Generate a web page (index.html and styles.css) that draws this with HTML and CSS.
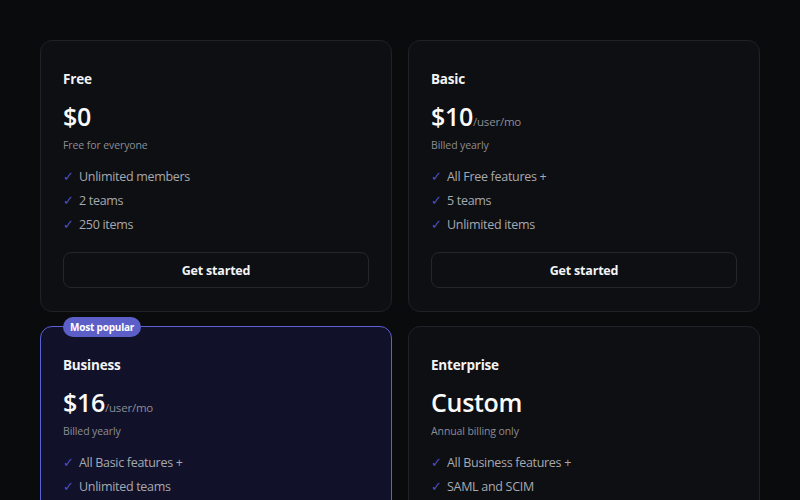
FILE: index.html
```html
<!DOCTYPE html>
<html>
<head>
<meta charset="utf-8">
<link rel="stylesheet" href="styles.css">
</head>
<body>
<div class="grid">
  <div class="card">
    <div class="name">Free</div>
    <div class="price"><span class="amount">$0</span></div>
    <div class="note">Free for everyone</div>
    <ul class="features">
      <li><span class="check">✓</span>Unlimited members</li>
      <li><span class="check">✓</span>2 teams</li>
      <li><span class="check">✓</span>250 items</li>
    </ul>
    <button class="btn">Get started</button>
  </div>
  <div class="card">
    <div class="name">Basic</div>
    <div class="price"><span class="amount">$10</span><span class="unit">/user/mo</span></div>
    <div class="note">Billed yearly</div>
    <ul class="features">
      <li><span class="check">✓</span>All Free features +</li>
      <li><span class="check">✓</span>5 teams</li>
      <li><span class="check">✓</span>Unlimited items</li>
    </ul>
    <button class="btn">Get started</button>
  </div>
  <div class="card popular">
    <span class="badge">Most popular</span>
    <div class="name">Business</div>
    <div class="price"><span class="amount">$16</span><span class="unit">/user/mo</span></div>
    <div class="note">Billed yearly</div>
    <ul class="features">
      <li><span class="check">✓</span>All Basic features +</li>
      <li><span class="check">✓</span>Unlimited teams</li>
      <li><span class="check">✓</span>Advanced permissions</li>
    </ul>
    <button class="btn primary">Get started</button>
  </div>
  <div class="card">
    <div class="name">Enterprise</div>
    <div class="price"><span class="amount">Custom</span></div>
    <div class="note">Annual billing only</div>
    <ul class="features">
      <li><span class="check">✓</span>All Business features +</li>
      <li><span class="check">✓</span>SAML and SCIM</li>
      <li><span class="check">✓</span>Dedicated support</li>
    </ul>
    <button class="btn">Contact sales</button>
  </div>
</div>
</body>
</html>
```
FILE: styles.css
```css
html, body {
  margin: 0;
  padding: 0;
  background: #0a0b0d;
  font-family: "Open Sans", "Noto Sans", sans-serif;
  color: #f3f4f6;
}
.grid {
  display: grid;
  grid-template-columns: 352px 352px;
  gap: 14px 16px;
  padding: 40px;
}
.card {
  position: relative;
  background: #0e0f12;
  border: 1px solid #212227;
  border-radius: 12px;
  padding: 27px 22px 23px;
  display: flex;
  flex-direction: column;
}
.card.popular {
  background: #11122a;
  border-color: #5b60d3;
}
.badge {
  position: absolute;
  top: -10px;
  left: 22px;
  height: 20px;
  line-height: 20px;
  padding: 0 7px;
  border-radius: 10px;
  background: #5b5fc7;
  color: #fff;
  font-size: 10px;
  font-weight: 700;
  letter-spacing: -0.2px;
}
.name {
  font-size: 13.5px;
  font-weight: 700;
  line-height: 22px;
  color: #f3f4f6;
  letter-spacing: -0.2px;
}
.price {
  margin-top: 11px;
  height: 30px;
  line-height: 30px;
  white-space: nowrap;
}
.amount {
  font-size: 25px;
  font-weight: 600;
  color: #fafafa;
  letter-spacing: -0.3px;
  line-height: 30px;
}
.unit {
  font-size: 11.5px;
  line-height: 16px;
  color: #8b8d95;
  letter-spacing: -0.2px;
}
.note {
  margin-top: 6px;
  font-size: 10.5px;
  line-height: 16px;
  color: #8b8d95;
  letter-spacing: -0.1px;
}
.features {
  list-style: none;
  margin: 15px 0 0;
  padding: 0;
  display: flex;
  flex-direction: column;
  gap: 6px;
}
.features li {
  font-size: 12.5px;
  line-height: 18px;
  color: #a7a9b0;
  display: flex;
  align-items: center;
  letter-spacing: -0.3px;
}
.check {
  width: 16px;
  color: #4a50d2;
  font-size: 13px;
  font-family: "DejaVu Sans", sans-serif;
}
.btn {
  margin-top: 18px;
  height: 36px;
  background: transparent;
  border: 1px solid #25262c;
  border-radius: 8px;
  color: #f3f4f6;
  font-family: inherit;
  font-size: 12.5px;
  font-weight: 700;
  letter-spacing: -0.2px;
}
.btn.primary {
  background: #5b5fc7;
  border-color: #5b5fc7;
}
```
